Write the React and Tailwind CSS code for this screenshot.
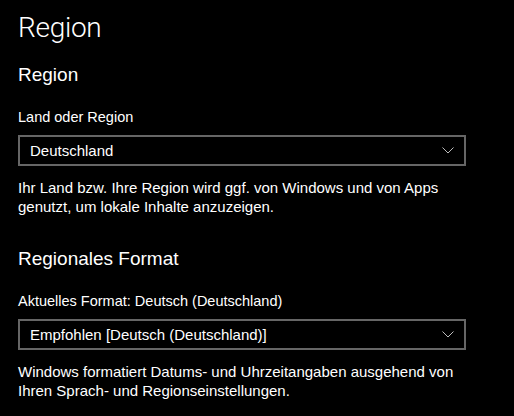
const Chevron = () => (
  <svg width="12" height="7" viewBox="0 0 12 7" className="shrink-0">
    <polyline points="0.5,0.5 6,6 11.5,0.5" fill="none" stroke="#bdbdbd" strokeWidth="1" />
  </svg>
);

const Dropdown = ({ value }) => (
  <div className="mt-[8px] w-[448px] h-[31px] border-2 border-[#666666] flex items-center justify-between pl-[10px] pr-[10px]">
    <span className="text-[15px] leading-[20px]">{value}</span>
    <Chevron />
  </div>
);

export default function App() {
  return (
    <div
      className="w-[514px] h-[416px] bg-black text-white overflow-hidden pl-[18px] pt-[10px]"
      style={{ fontFamily: '"Liberation Sans", Arial, sans-serif' }}
    >
      <h1
        className="text-[28px] leading-[36px] font-light tracking-[-0.3px]"
        style={{ fontFamily: 'Roboto, "Liberation Sans", sans-serif' }}
      >
        Region
      </h1>

      <h2 className="mt-[15px] text-[19px] leading-[28px]">Region</h2>
      <div className="mt-[18px] text-[14.5px] leading-[20px]">Land oder Region</div>
      <Dropdown value="Deutschland" />
      <p className="mt-[12px] w-[460px] text-[15px] leading-[19px]">
        Ihr Land bzw. Ihre Region wird ggf. von Windows und von Apps
        <br />
        genutzt, um lokale Inhalte anzuzeigen.
      </p>

      <h2 className="mt-[29px] text-[19px] leading-[28px]">Regionales Format</h2>
      <div className="mt-[18px] text-[14.5px] leading-[20px]">Aktuelles Format: Deutsch (Deutschland)</div>
      <Dropdown value="Empfohlen [Deutsch (Deutschland)]" />
      <p className="mt-[12px] w-[460px] text-[15px] leading-[19px]">
        Windows formatiert Datums- und Uhrzeitangaben ausgehend von
        <br />
        Ihren Sprach- und Regionseinstellungen.
      </p>
    </div>
  );
}
